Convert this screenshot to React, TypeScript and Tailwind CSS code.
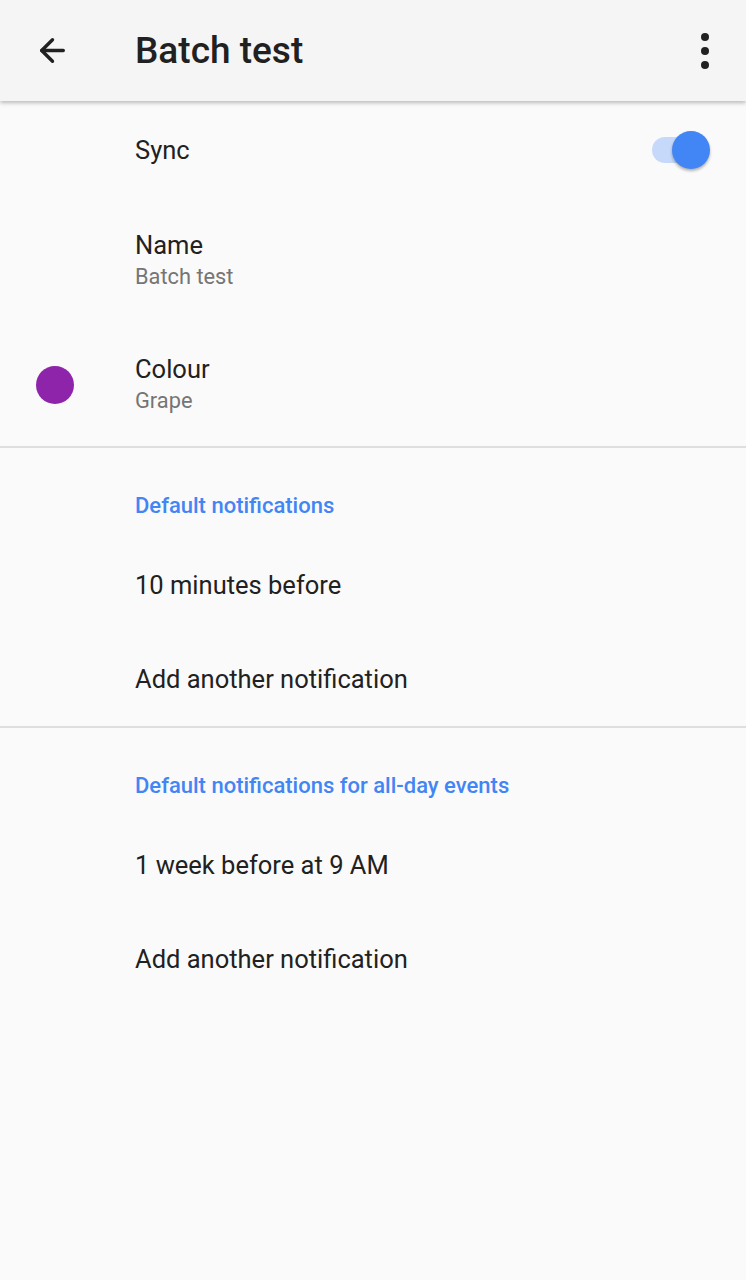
import { ArrowLeft } from "lucide-react";

function Row({ title, subtitle, left, right, h }: { title: string; subtitle?: string; left?: React.ReactNode; right?: React.ReactNode; h: string }) {
  return (
    <div className={`flex items-center ${h}`}>
      <div className="w-[135px] flex justify-center pr-[24px]">{left}</div>
      <div className="flex-1">
        <div className="text-[25.5px] leading-[32px] text-[#212121]">{title}</div>
        {subtitle && <div className="text-[21.8px] leading-[32px] text-[#757575]">{subtitle}</div>}
      </div>
      {right}
    </div>
  );
}

function Toggle() {
  return (
    <div className="relative w-[64px] h-[40px] mr-[36px] flex items-center">
      <div className="ml-[6px] w-[52px] h-[26px] rounded-full bg-[#c6d9fb]" />
      <div className="absolute right-[0px] top-[1px] w-[38px] h-[38px] rounded-full bg-[#4285f4] shadow-[0_2px_3px_rgba(0,0,0,0.3)]" />
    </div>
  );
}

function SectionHeader({ text }: { text: string }) {
  return (
    <div className="h-[90px] pl-[135px] pt-[43px]">
      <div className="text-[22px] leading-[30px] font-medium text-[#4285f4]">{text}</div>
    </div>
  );
}

function Item({ text }: { text: string }) {
  return (
    <div className="h-[94px] pl-[135px] flex items-center">
      <div className="text-[25.5px] leading-[32px] text-[#212121]">{text}</div>
    </div>
  );
}

export default function App() {
  return (
    <div className="min-h-[1280px] bg-[#fafafa] font-['Roboto',sans-serif]">
      <div className="h-[101px] bg-[#f5f5f5] flex items-center shadow-[0_2px_4px_rgba(0,0,0,0.25)] relative z-10">
        <div className="w-[135px] pl-[34px]">
          <ArrowLeft className="w-[37px] h-[37px] text-[#212121]" strokeWidth={2.2} />
        </div>
        <div className="flex-1 text-[37px] font-medium text-[#212121] leading-[40px]">Batch test</div>
        <div className="flex flex-col gap-[6px] mr-[37px] items-center">
          <div className="w-[8px] h-[8px] rounded-full bg-[#212121]" />
          <div className="w-[8px] h-[8px] rounded-full bg-[#212121]" />
          <div className="w-[8px] h-[8px] rounded-full bg-[#212121]" />
        </div>
      </div>
      <Row h="h-[97px]" title="Sync" right={<Toggle />} />
      <Row h="h-[126px]" title="Name" subtitle="Batch test" />
      <Row
        h="h-[122px]"
        title="Colour"
        subtitle="Grape"
        left={<div className="w-[38px] h-[38px] rounded-full bg-[#8e24aa] ml-[-2px]" />}
      />
      <div className="h-[2px] bg-[#dedede]" />
      <SectionHeader text="Default notifications" />
      <Item text="10 minutes before" />
      <Item text="Add another notification" />
      <div className="h-[2px] bg-[#dedede]" />
      <SectionHeader text="Default notifications for all-day events" />
      <Item text="1 week before at 9 AM" />
      <Item text="Add another notification" />
    </div>
  );
}
